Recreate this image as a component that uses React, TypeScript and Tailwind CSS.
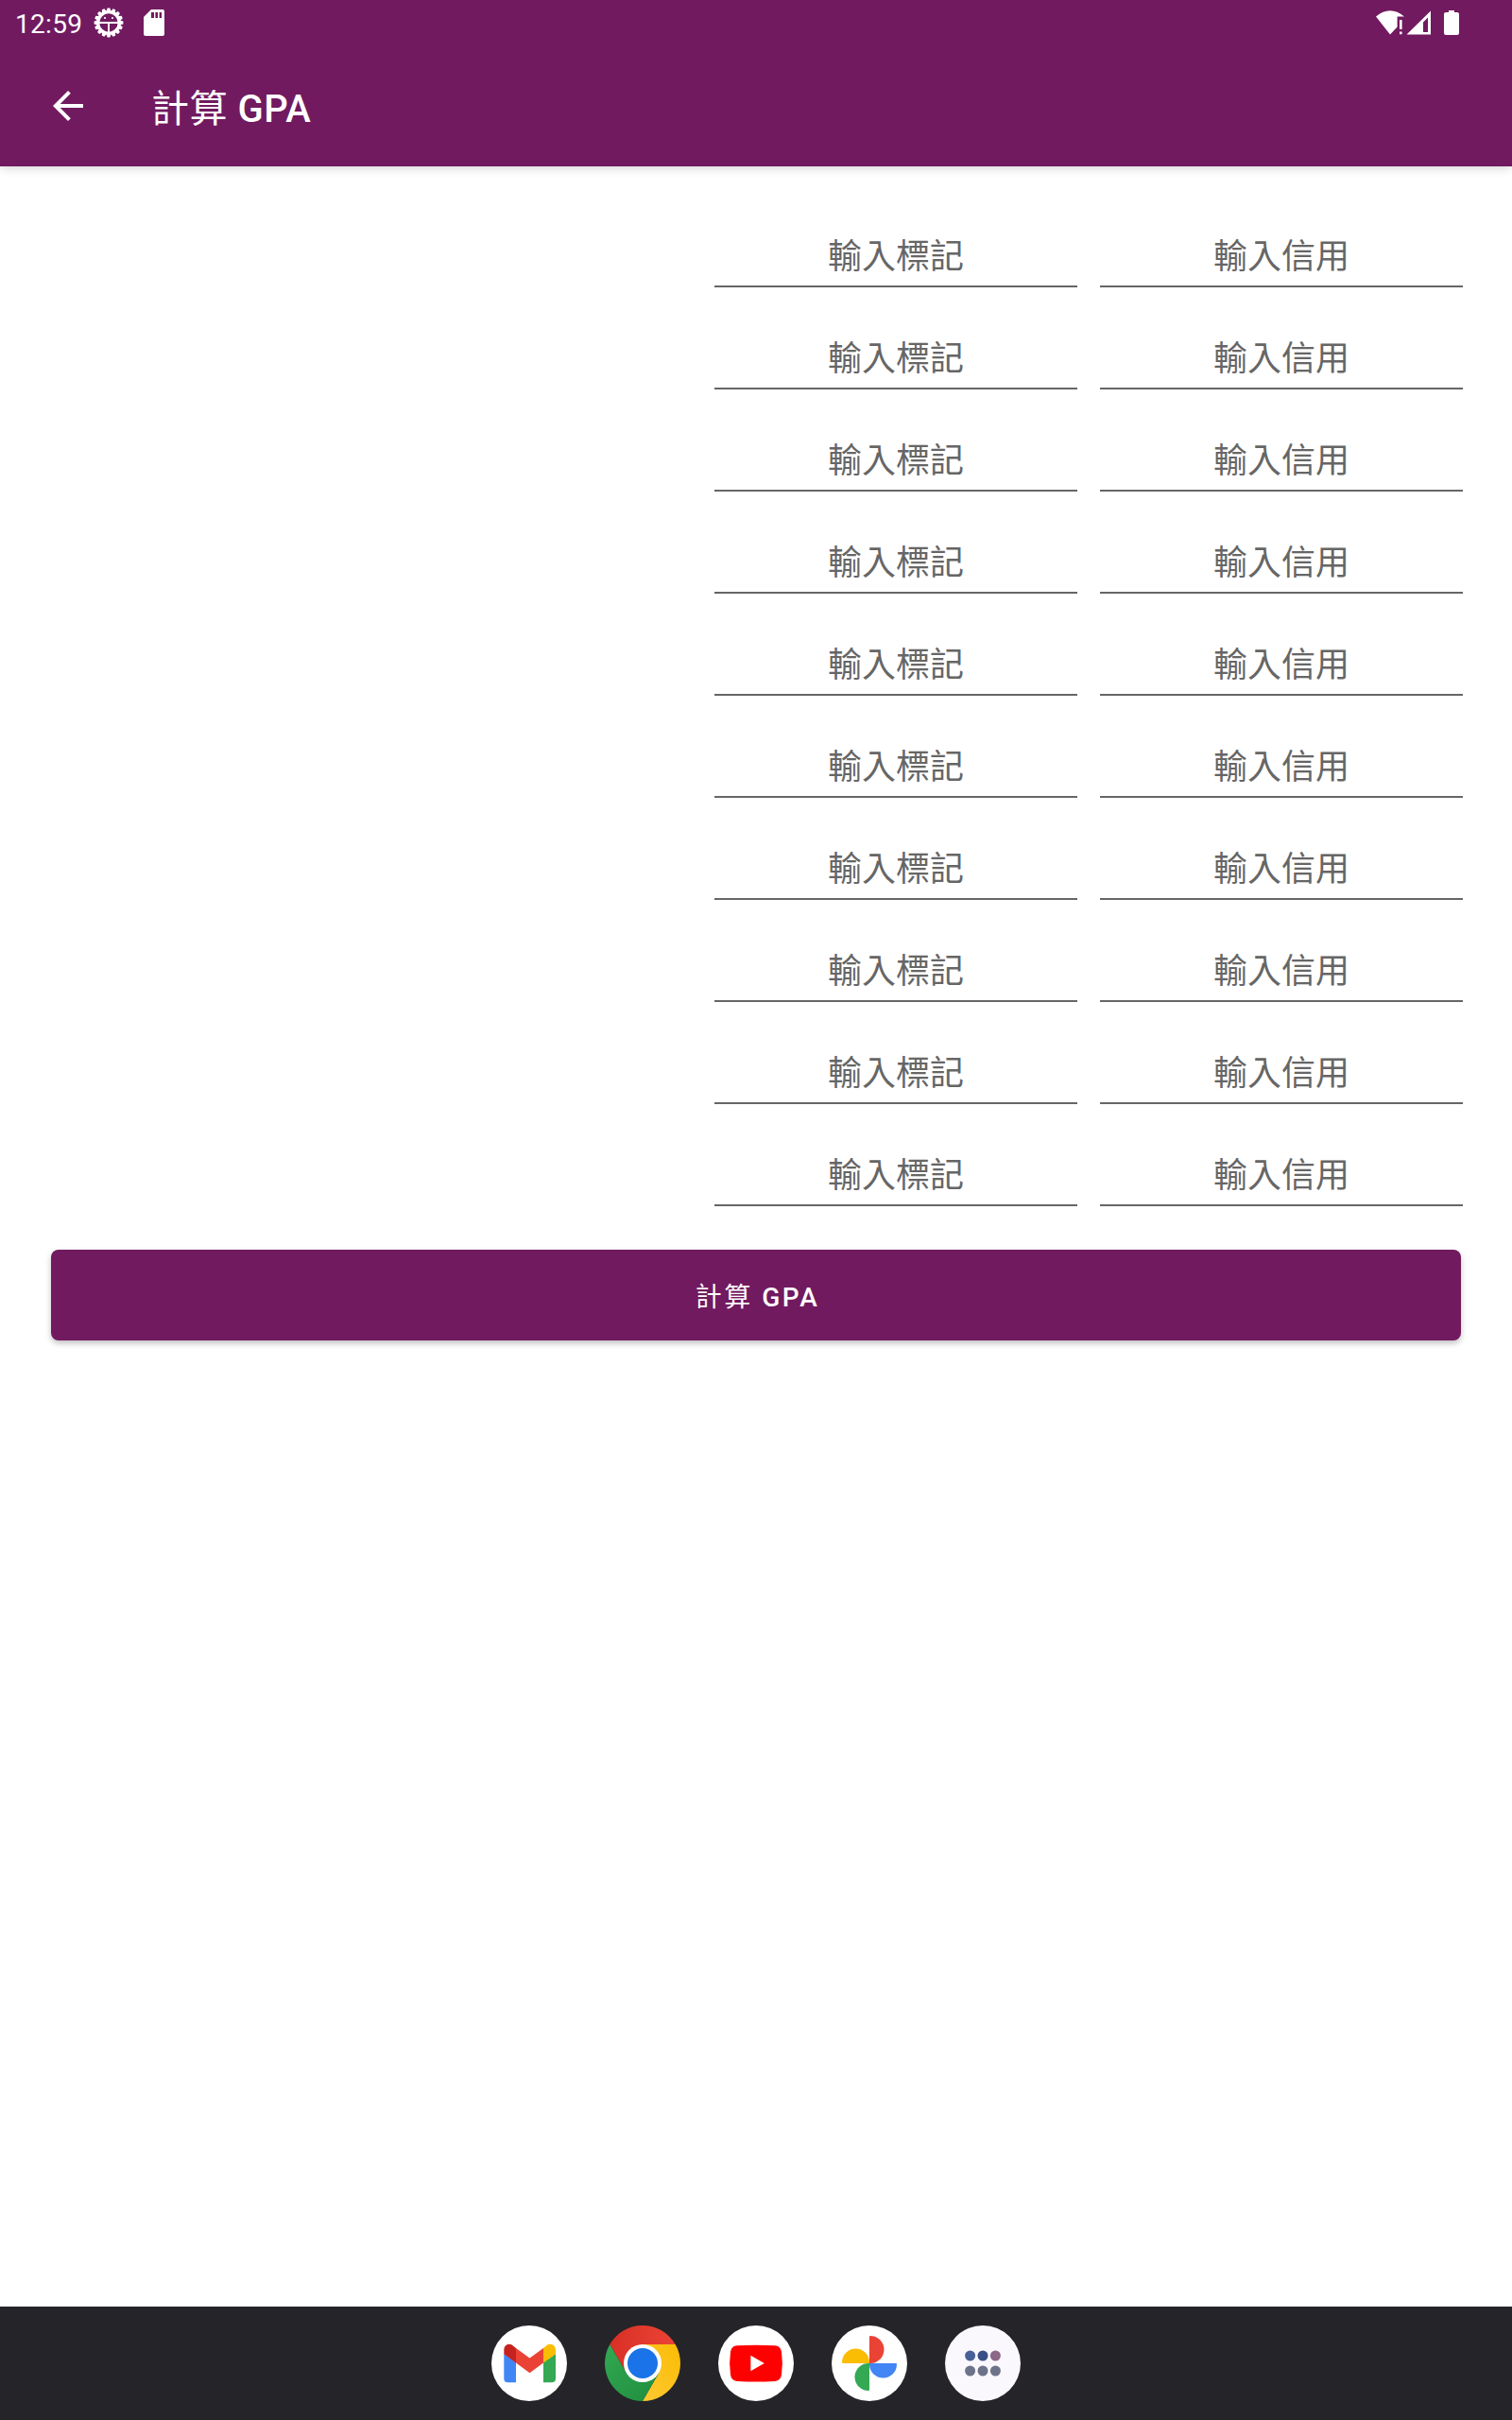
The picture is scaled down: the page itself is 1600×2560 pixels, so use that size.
import React from "react";

const FONT = "font-['Roboto','Noto_Sans_CJK_TC',sans-serif]";

const teeth = Array.from({ length: 16 }, (_, i) => i * 22.5);

function GearIcon() {
  return (
    <svg className="ml-[14px]" width="32" height="32" viewBox="-16 -16 32 32">
      {teeth.map((a) => (
        <path key={a} d="M-2.8 -11L-1.4 -15.4H1.4L2.8 -11Z" fill="#fff" transform={`rotate(${a})`} />
      ))}
      <circle r="11.2" fill="none" stroke="#fff" strokeWidth="3" />
      <path d="M-10 0H10M0 0V10" stroke="#fff" strokeWidth="2" fill="none" />
      <circle cx="-4" cy="-5" r="1.1" fill="#fff" />
      <circle cx="4" cy="-5" r="1.1" fill="#fff" />
    </svg>
  );
}

function StatusBar() {
  return (
    <div className="flex h-12 items-center pl-4 text-white">
      <span className="mt-[4px] w-[69px] whitespace-nowrap text-[28px] leading-[48px] tracking-[0.3px]">12:59</span>
      <GearIcon />
      <svg className="ml-[21px]" width="22" height="28" viewBox="0 0 22 28">
        <path
          fillRule="evenodd"
          d="M8 0H20Q22 0 22 2V26Q22 28 20 28H2Q0 28 0 26V8ZM8 3V9H11V3ZM12.4 3V9H15V3ZM16.6 3V9H19V3Z"
          fill="#fff"
        />
      </svg>
      <div className="ml-auto flex pr-[56px]">
        <svg width="88" height="26" viewBox="0 0 88 26" fill="#fff">
          <path d="M0 6.5Q15 -6 30 6.5H22.6V17.5L15 25.5Z" />
          <path d="M25 10H27.6V20H25ZM25 22.6H27.6V25.2H25Z" />
          <path fillRule="evenodd" d="M58 .5V25.5H32.5ZM55 7.5L50 12.5V23H55Z" />
          <path d="M77 0H83V2H86Q88 2 88 4V24Q88 26 86 26H74Q72 26 72 24V4Q72 2 74 2H77Z" />
        </svg>
      </div>
    </div>
  );
}

function AppBar() {
  return (
    <header className="h-44 shrink-0 bg-[#711a5f] shadow-[0_2px_10px_rgba(0,0,0,0.16)]">
      <StatusBar />
      <div className="flex h-32 items-center pl-14 text-white">
        <svg width="32" height="32" viewBox="4 4 16 16" fill="#fff">
          <path d="M20 11H7.83l5.59-5.59L12 4l-8 8 8 8 1.41-1.41L7.83 13H20z" />
        </svg>
        <h1 className="ml-[72px] mt-[7px] text-[40px] leading-[48px] font-medium tracking-[0.5px] whitespace-pre">
          <span className="font-normal">計算</span> GPA
        </h1>
      </div>
    </header>
  );
}

function Field({ label }: { label: string }) {
  return (
    <div className="flex h-[108px] w-96 items-end justify-center border-b-2 border-[#666666] pb-[4px] text-[36px] leading-[52px] text-[#666666]">
      {label}
    </div>
  );
}

function Launcher({ children }: { children: React.ReactNode }) {
  return (
    <svg width="80" height="80" viewBox="-40 -40 80 80">
      {children}
    </svg>
  );
}

function Dock() {
  return (
    <nav className="flex h-[120px] shrink-0 items-center justify-center gap-10 bg-[#252429]">
      <Launcher>
        <circle r="40" fill="#fff" />
        <path d="M-26.7 -10L-14 -1V20.3H-22.5Q-26.7 20.3 -26.7 16Z" fill="#4285f4" />
        <path d="M28 -10L15 -1V20.3H23.5Q28 20.3 28 16Z" fill="#34a853" />
        <path d="M-14 -16L.5 -5.5L15 -16V-.5L.5 10.3L-14 -.5Z" fill="#ea4335" />
        <path d="M-14 -16V-.5L-26.7 -9.7V-14C-26.7 -20 -20.5 -22.5 -16.5 -18Z" fill="#c5221f" />
        <path d="M15 -16V-.5L28 -9.7V-14C28 -20 21.5 -22.5 17.5 -18Z" fill="#fbbc04" />
      </Launcher>
      <Launcher>
        <defs>
          <linearGradient id="red" x1="0" x2="1">
            <stop stopColor="#d93025" />
            <stop offset="1" stopColor="#ea4335" />
          </linearGradient>
          <linearGradient id="yellow" x1="0" x2="1" y1="1" y2="0">
            <stop stopColor="#fcc934" />
            <stop offset="1" stopColor="#fbbc04" />
          </linearGradient>
          <linearGradient id="green" x1="1" x2="0" y1="1" y2="0">
            <stop stopColor="#1e8e3e" />
            <stop offset="1" stopColor="#34a853" />
          </linearGradient>
        </defs>
        <path d="M-34.64 -20A40 40 0 0 1 34.64 -20H0L-17.32 10Z" fill="url(#red)" />
        <path d="M34.64 -20A40 40 0 0 1 0 40L17.32 10L0 -20Z" fill="url(#yellow)" />
        <path d="M0 40A40 40 0 0 1 -34.64 -20L-17.32 10H17.32Z" fill="url(#green)" />
        <circle r="20" fill="#fff" />
        <circle r="16" fill="#1a73e8" />
      </Launcher>
      <Launcher>
        <circle r="40" fill="#fff" />
        <path
          d="M-20 -18.7Q0 -20 20 -18.7Q26.3 -18.2 27 -12Q28.8 0 27 12Q26.3 18.2 20 18.9Q0 20 -20 18.9Q-26.3 18.2 -27 12Q-28.8 0 -27 -12Q-26.3 -18.2 -20 -18.7Z"
          fill="#f00"
        />
        <path d="M-5.6 -8.2L8.8 0L-5.6 8.2Z" fill="#fff" />
      </Launcher>
      <Launcher>
        <circle r="40" fill="#fff" />
        <path d="M0 0V-28Q0 -29 1 -29A14.5 14.5 0 0 1 1 0Z" fill="#ea4335" />
        <path d="M0 0H28Q29 0 29 1A14.5 14.5 0 0 1 0 1Z" fill="#4285f4" />
        <path d="M0 0V28Q0 29 -1 29A14.5 14.5 0 0 1 -1 0Z" fill="#34a853" />
        <path d="M0 0H-28Q-29 0 -29 -1A14.5 14.5 0 0 1 0 -1Z" fill="#fbbc04" />
      </Launcher>
      <Launcher>
        <circle r="40" fill="#faf8fd" />
        <circle cx="-13.4" cy="-8" r="5.5" fill="#4a5f97" />
        <circle cx="0" cy="-8" r="5.5" fill="#3a4f86" />
        <circle cx="13.4" cy="-8" r="5.5" fill="#8b6788" />
        <circle cx="-13.4" cy="8" r="5.5" fill="#6d7389" />
        <circle cx="0" cy="8" r="5.5" fill="#6d7389" />
        <circle cx="13.4" cy="8" r="5.5" fill="#6d7389" />
      </Launcher>
    </nav>
  );
}

export default function App() {
  return (
    <div className={`flex h-[2560px] w-[1600px] flex-col bg-white ${FONT}`}>
      <AppBar />
      <main className="flex flex-1 flex-col pt-5">
        {Array.from({ length: 10 }, (_, i) => (
          <div key={i} className="flex justify-end gap-6 pr-[52px]">
            <Field label="輸入標記" />
            <Field label="輸入信用" />
          </div>
        ))}
        <button className="mx-[54px] mt-[46px] h-24 rounded-lg bg-[#711a5f] pt-[5px] pl-[3px] text-[28px] font-medium tracking-[2.5px] text-white shadow-[0_3px_6px_rgba(0,0,0,0.25)]">
          <span className="font-normal">計算</span> GPA
        </button>
      </main>
      <Dock />
    </div>
  );
}
